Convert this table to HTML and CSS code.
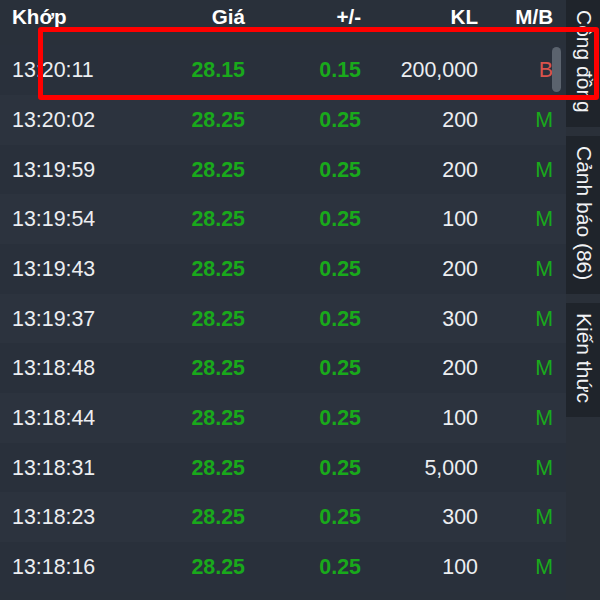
FILE: index.html
```html
<!DOCTYPE html>
<html lang="vi">
<head>
<meta charset="utf-8">
<title>Khớp lệnh</title>
<link rel="stylesheet" href="styles.css">
</head>
<body>
<div class="app">
  <main class="board">
    <div class="row head">
      <span class="c-time">Khớp</span>
      <span class="c-num">Giá</span>
      <span class="c-num">+/-</span>
      <span class="c-num">KL</span>
      <span class="c-num">M/B</span>
    </div>
    <div class="row"><span class="c-time">13:20:11</span><span class="c-num up">28.15</span><span class="c-num up">0.15</span><span class="c-num">200,000</span><span class="c-num side-b">B</span></div>
    <div class="row alt"><span class="c-time">13:20:02</span><span class="c-num up">28.25</span><span class="c-num up">0.25</span><span class="c-num">200</span><span class="c-num side-m">M</span></div>
    <div class="row"><span class="c-time">13:19:59</span><span class="c-num up">28.25</span><span class="c-num up">0.25</span><span class="c-num">200</span><span class="c-num side-m">M</span></div>
    <div class="row alt"><span class="c-time">13:19:54</span><span class="c-num up">28.25</span><span class="c-num up">0.25</span><span class="c-num">100</span><span class="c-num side-m">M</span></div>
    <div class="row"><span class="c-time">13:19:43</span><span class="c-num up">28.25</span><span class="c-num up">0.25</span><span class="c-num">200</span><span class="c-num side-m">M</span></div>
    <div class="row alt"><span class="c-time">13:19:37</span><span class="c-num up">28.25</span><span class="c-num up">0.25</span><span class="c-num">300</span><span class="c-num side-m">M</span></div>
    <div class="row"><span class="c-time">13:18:48</span><span class="c-num up">28.25</span><span class="c-num up">0.25</span><span class="c-num">200</span><span class="c-num side-m">M</span></div>
    <div class="row alt"><span class="c-time">13:18:44</span><span class="c-num up">28.25</span><span class="c-num up">0.25</span><span class="c-num">100</span><span class="c-num side-m">M</span></div>
    <div class="row"><span class="c-time">13:18:31</span><span class="c-num up">28.25</span><span class="c-num up">0.25</span><span class="c-num">5,000</span><span class="c-num side-m">M</span></div>
    <div class="row alt"><span class="c-time">13:18:23</span><span class="c-num up">28.25</span><span class="c-num up">0.25</span><span class="c-num">300</span><span class="c-num side-m">M</span></div>
    <div class="row"><span class="c-time">13:18:16</span><span class="c-num up">28.25</span><span class="c-num up">0.25</span><span class="c-num">100</span><span class="c-num side-m">M</span></div>
    <div class="scroll-thumb"></div>
  </main>
  <aside class="tabs">
    <div class="tab">Cộng đồng</div>
    <div class="tab">Cảnh báo (86)</div>
    <div class="tab">Kiến thức</div>
  </aside>
  <div class="highlight"></div>
</div>
</body>
</html>
```
FILE: styles.css
```css
html, body {
  margin: 0;
  padding: 0;
  height: 100%;
}
body {
  background: #29303a;
  color: #eceef1;
  font-family: "Liberation Sans", Arial, sans-serif;
  font-size: 21.4px;
  overflow: hidden;
}
.app {
  position: relative;
  display: flex;
  height: 600px;
  overflow: hidden;
}
.board {
  position: relative;
  flex: 1;
  background: #29303a;
}
.row {
  display: grid;
  grid-template-columns: 118px 115px 116px 117px 75px;
  padding-left: 12px;
  height: 49.7px;
  align-items: center;
  line-height: 24px;
  background: #29303b;
}
.row.alt {
  background: #2c333e;
}
.row.head {
  height: 45.3px;
  align-items: start;
  padding-top: 5px;
  box-sizing: border-box;
  font-size: 20.6px;
  font-weight: bold;
  color: #ffffff;
  background: #29303a;
}
.c-time {
  text-align: left;
}
.c-num {
  text-align: right;
}
.up {
  color: #19a91b;
  font-weight: bold;
}
.side-m {
  color: #19a91b;
}
.side-b {
  color: #d9534c;
}
.scroll-thumb {
  position: absolute;
  left: 552px;
  top: 47px;
  width: 9px;
  height: 45px;
  border-radius: 5px;
  background: #5b636e;
}
.tabs {
  width: 34px;
  flex: none;
  background: #2a3039;
  display: flex;
  flex-direction: column;
  gap: 9px;
}
.tab {
  writing-mode: vertical-rl;
  background: #1f242b;
  color: #f2f3f5;
  font-size: 21px;
  padding: 10px 0 14px;
  line-height: 32px;
  text-align: left;
  white-space: nowrap;
}
.highlight {
  position: absolute;
  left: 38px;
  top: 27px;
  width: 561px;
  height: 73px;
  box-sizing: border-box;
  border: 5px solid #ff0000;
  border-radius: 3px;
}
```
